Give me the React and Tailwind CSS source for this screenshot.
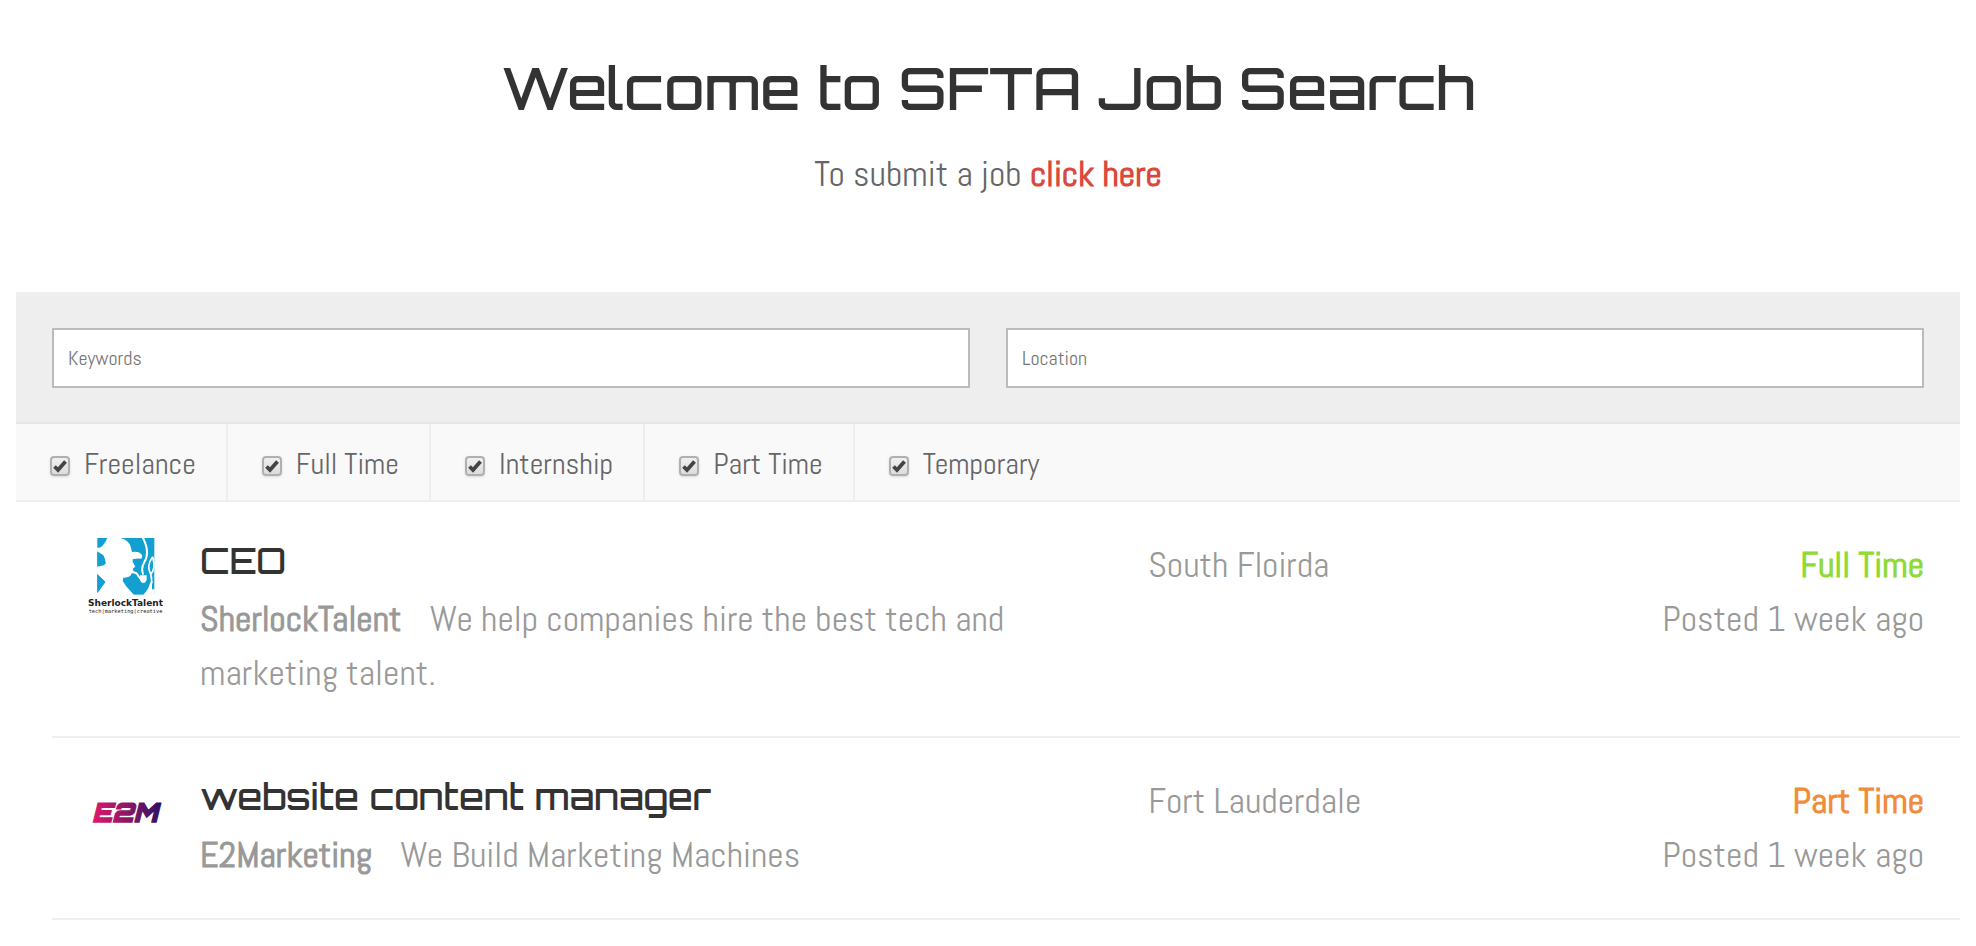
import React, { useState } from 'react';

const jobTypes = ['Freelance', 'Full Time', 'Internship', 'Part Time', 'Temporary'];

const jobs = [
  {
    id: 1,
    title: 'CEO',
    company: 'SherlockTalent',
    tagline: 'We help companies hire the best tech and marketing talent.',
    location: 'South Floirda',
    type: 'Full Time',
    typeClass: 'text-[#90da36]',
    posted: 'Posted 1 week ago',
    Logo: SherlockLogo,
  },
  {
    id: 2,
    title: 'website content manager',
    company: 'E2Marketing',
    tagline: 'We Build Marketing Machines',
    location: 'Fort Lauderdale',
    type: 'Part Time',
    typeClass: 'text-[#f08d3c]',
    posted: 'Posted 1 week ago',
    Logo: E2MLogo,
  },
];

function SherlockLogo() {
  return (
    <svg viewBox="0 0 228 228" className="size-[76px] shrink-0" role="img" aria-label="SherlockTalent logo">
      <rect x="28" y="0" width="171" height="170" fill="#129fd2" />
      {/* profile with the hat */}
      <path
        fill="#fff"
        d="M58 0 H98 Q122 6 128 26 L132 42 Q152 38 162 50 Q164 58 160 62 Q148 60 134 64 L134 72 L142 86 L134 92 L137 100 L131 106 Q128 120 106 119 L104 128 L114 144 L138 171 H27 V164 L52 132 L27 108 V84 Q48 80 53 76 Q50 52 43 50 L27 42 V30 Q46 30 58 0 Z"
      />
      <path fill="#129fd2" d="M28 40 L43 50 Q50 62 53 76 L48 82 L28 86 Z" />
      <path fill="#129fd2" d="M28 108 L52 132 L28 166 Z" />
      {/* pipe and smoke */}
      <path fill="none" stroke="#fff" strokeWidth="6" strokeLinejoin="round" d="M132 103 Q146 102 151 114 Q154 122 162 124" />
      <path fill="#fff" d="M156 112 H176 V124 Q174 136 164 135 Q154 132 156 112 Z" />
      <path fill="none" stroke="#fff" strokeWidth="6" d="M166 110 Q158 92 168 74 Q188 44 164 -2" />
      <path fill="none" stroke="#fff" strokeWidth="5" d="M194 56 Q174 84 188 108 Q204 96 194 56 M188 106 L192 136" />
      <path fill="#fff" d="M200 104 L192 124 V154 H200 V171 H166 L180 152 L190 126 Z" />
      <text x="0" y="203" fontSize="27" fontWeight="700" fill="#222" fontFamily="DejaVu Sans, sans-serif">SherlockTalent</text>
      <text x="2" y="224" fontSize="16" fill="#222" fontFamily="DejaVu Sans Mono, monospace">tech|marketing|creative</text>
    </svg>
  );
}

function E2MLogo() {
  return (
    <svg viewBox="0 0 76 76" className="size-[76px] shrink-0" role="img" aria-label="E2M logo">
      <defs>
        <linearGradient id="e2m" x1="0" y1="0" x2="1" y2="0">
          <stop offset="0" stopColor="#e0186c" />
          <stop offset="0.5" stopColor="#8e1668" />
          <stop offset="1" stopColor="#2c0f63" />
        </linearGradient>
      </defs>
      <text
        x="4"
        y="48"
        fontSize="26"
        fontWeight="900"
        fontStyle="italic"
        fill="url(#e2m)"
        stroke="url(#e2m)"
        strokeWidth="1.4"
        fontFamily="Orbitron, sans-serif"
      >
        E2M
      </text>
    </svg>
  );
}

function TypeFilter({ label, checked, onChange }) {
  return (
    <label className="flex items-center gap-[14px] border-r-2 border-[#eee] pl-[34px] pr-[30px] pt-5 pb-4 text-[30px] leading-10 last:border-r-0">
      <span className="mt-1 grid size-5">
        <input
          type="checkbox"
          checked={checked}
          onChange={onChange}
          className="peer col-start-1 row-start-1 size-5 appearance-none rounded border-2 border-[#b0b0b0] bg-linear-to-b from-[#f0f0f0] to-[#dcdcdc] shadow-sm"
        />
        <svg viewBox="0 0 20 20" className="pointer-events-none invisible col-start-1 row-start-1 size-5 peer-checked:visible">
          <path d="M4.5 10.5 L8 14 L15.5 5.5" fill="none" stroke="#444" strokeWidth="3.8" />
        </svg>
      </span>
      {label}
    </label>
  );
}

function JobRow({ job }) {
  const { Logo } = job;
  return (
    <li className="flex gap-9 border-b-2 border-[#eee] px-9 py-9 text-[36px] leading-[54px] text-[#999]">
      <Logo />
      <div className="grid flex-1 grid-cols-[55fr_25fr_20fr]">
        <div className="pr-6">
          <h3 className="mb-2 font-[Orbitron,sans-serif] text-[36px] leading-[46px] font-medium text-[#333]">{job.title}</h3>
          <p>
            <strong className="mr-5 font-bold">{job.company}</strong> {job.tagline}
          </p>
        </div>
        <p>{job.location}</p>
        <div className="text-right whitespace-nowrap">
          <p className={`font-bold ${job.typeClass}`}>{job.type}</p>
          <p>{job.posted}</p>
        </div>
      </div>
    </li>
  );
}

function App() {
  const [keywords, setKeywords] = useState('');
  const [location, setLocation] = useState('');
  const [selected, setSelected] = useState(jobTypes);

  const toggleType = (type) => {
    setSelected((prev) => (prev.includes(type) ? prev.filter((t) => t !== type) : [...prev, type]));
  };

  const inputClass =
    'h-[60px] min-w-0 flex-1 border-2 border-[#bbb] bg-white px-[14px] text-[20px] text-[#666] outline-none placeholder:text-[#757575]';

  return (
    <main className="bg-white px-4 font-[Abel,sans-serif] text-[#666]">
      <header className="pt-14 pb-[91px] text-center">
        <h1 className="mb-[27px] font-[Orbitron,sans-serif] text-[58px] leading-[64px] font-medium text-[#333]">
          Welcome to SFTA Job Search
        </h1>
        <p className="text-[36px] leading-[54px]">
          To submit a job <a href="#submit" className="font-bold text-[#d9493d]">click here</a>
        </p>
      </header>

      {/* Search filters */}
      <form onSubmit={(e) => e.preventDefault()}>
        <div className="flex gap-9 border-b-2 border-[#e5e5e5] bg-[#eee] px-9 pt-9 pb-[34px]">
          <input
            type="text"
            aria-label="Keywords"
            placeholder="Keywords"
            value={keywords}
            onChange={(e) => setKeywords(e.target.value)}
            className={inputClass}
          />
          <input
            type="text"
            aria-label="Location"
            placeholder="Location"
            value={location}
            onChange={(e) => setLocation(e.target.value)}
            className={inputClass}
          />
        </div>
        <div className="flex border-b-2 border-[#eee] bg-[#f9f9f9]">
          {jobTypes.map((type) => (
            <TypeFilter key={type} label={type} checked={selected.includes(type)} onChange={() => toggleType(type)} />
          ))}
        </div>
      </form>

      {/* Listings */}
      <ul className="pl-9">
        {jobs.map((job) => (
          <JobRow key={job.id} job={job} />
        ))}
      </ul>
    </main>
  );
}

export default App;
